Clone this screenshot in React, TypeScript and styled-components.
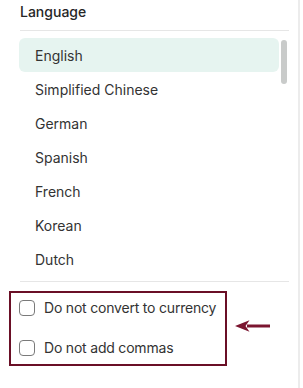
import React from 'react';
import styled, { createGlobalStyle } from 'styled-components';

const GlobalStyle = createGlobalStyle`
  html, body {
    margin: 0;
    padding: 0;
    background: #ffffff;
  }
  body {
    font-family: Inter, "Noto Sans", "Liberation Sans", sans-serif;
    color: #2e2e2e;
  }
`;

const Panel = styled.div`
  width: 300px;
  height: 388px;
  box-sizing: border-box;
  border-right: 2px solid #ececec;
  padding: 2px 9px 0 20px;
  display: flex;
  flex-direction: column;
`;

const Heading = styled.div`
  font-size: 14px;
  font-weight: 500;
  line-height: 20px;
  color: #262626;
  margin-bottom: 8px;
`;

const Divider = styled.div<{ $top?: number; $bottom?: number }>`
  height: 1px;
  background: #e6e6e6;
  margin-top: ${({ $top }) => $top ?? 0}px;
  margin-bottom: ${({ $bottom }) => $bottom ?? 0}px;
`;

const ListWrap = styled.div`
  display: flex;
  gap: 2px;
  margin-left: -1px;
  height: 240px;
`;

const List = styled.ul`
  list-style: none;
  margin: 0;
  padding: 0;
  flex: 1;
  overflow: hidden;
`;

const Item = styled.li<{ $active?: boolean }>`
  height: 34px;
  display: flex;
  align-items: center;
  padding-left: 16px;
  font-size: 14px;
  color: #333333;
  border-radius: 6px;
  background: ${({ $active }) => ($active ? '#e6f4f0' : 'transparent')};
`;

const ScrollTrack = styled.div`
  width: 6px;
  padding-top: 2px;
  margin-right: 2px;
`;

const ScrollThumb = styled.div`
  width: 6px;
  height: 44px;
  border-radius: 3px;
  background: #c9cbca;
`;

const OptionsRow = styled.div`
  display: flex;
  align-items: center;
  margin-left: -11px;
  margin-top: 9px;
`;

const OptionsBox = styled.div`
  width: 218px;
  box-sizing: border-box;
  border: 2px solid #6a0f26;
  padding: 3px 8px 4px;
  display: flex;
  flex-direction: column;
  gap: 16px;
`;

const Option = styled.label`
  display: flex;
  align-items: center;
  gap: 9px;
  height: 24px;
  font-size: 14px;
  color: #333333;
  white-space: nowrap;
`;

const OptionText = styled.span`
  line-height: 18px;
  letter-spacing: -0.2px;
`;

const Box = styled.span`
  width: 16px;
  height: 16px;
  box-sizing: border-box;
  border: 1.5px solid #7a7a7a;
  border-radius: 4px;
  flex-shrink: 0;
`;

const ArrowWrap = styled.div`
  margin-left: 8px;
  margin-top: -6px;
  display: flex;
`;

// only the rows that fit in the visible part of the list
const languages = [
  'English',
  'Simplified Chinese',
  'German',
  'Spanish',
  'French',
  'Korean',
  'Dutch',
];

export default function App() {
  return (
    <>
      <GlobalStyle />
      <Panel>
        <Heading>Language</Heading>
        <Divider $bottom={7} />
        <ListWrap>
          <List>
            {languages.map((lang, i) => (
              <Item key={lang} $active={i === 0}>
                {lang}
              </Item>
            ))}
          </List>
          <ScrollTrack>
            <ScrollThumb />
          </ScrollTrack>
        </ListWrap>
        <Divider $top={3} />
        <OptionsRow>
          <OptionsBox>
            <Option>
              <Box />
              <OptionText>Do not convert to currency</OptionText>
            </Option>
            <Option>
              <Box />
              <OptionText>Do not add commas</OptionText>
            </Option>
          </OptionsBox>
          <ArrowWrap>
            <svg width="36" height="12" viewBox="0 0 36 12">
              <path d="M12 4.5 H35 V7.5 H12 Z" fill="#7b1530" />
              <path d="M0 6 L14.5 0.3 L10.5 6 L14.5 11.7 Z" fill="#7b1530" />
            </svg>
          </ArrowWrap>
        </OptionsRow>
      </Panel>
    </>
  );
}
